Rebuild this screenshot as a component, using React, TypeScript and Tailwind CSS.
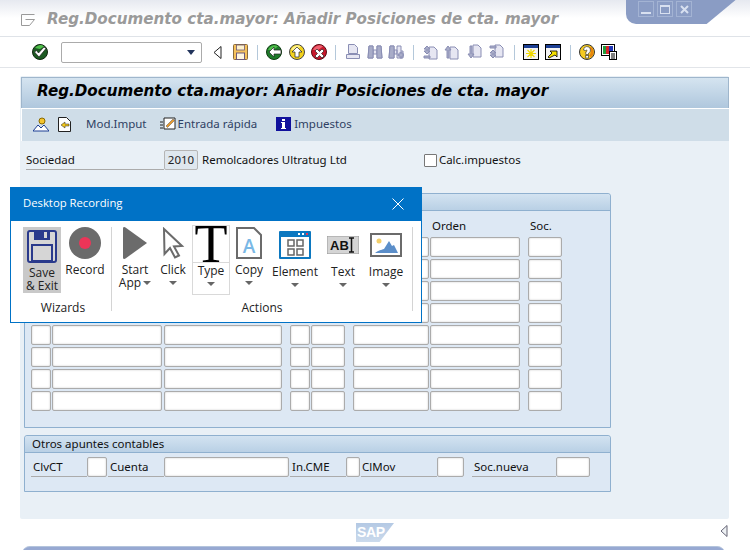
import type { ReactNode } from "react";

const sapFont = "font-['Noto_Sans',sans-serif]";

function Sep() {
  return <div className="w-px h-[15px] bg-[#b4c8da]" />;
}

function Check() {
  return (
    <svg width="16" height="16" viewBox="0 0 16 16">
      <circle cx="8" cy="8" r="7.5" fill="#1c5a22" stroke="#10260f" />
      <path d="M3 4a6 6 0 0 1 9-1.500L8 5z" fill="#4fc04a" />
      <path d="M2.500 8l2-1.500 2 2.500 5.500-6 2 1.500L7 13z" fill="#fff" stroke="#222" strokeWidth="0.7" />
    </svg>
  );
}

function Round({ bg, edge, shine, d }: { bg: string; edge: string; shine: string; d: string }) {
  return (
    <svg width="16" height="16" viewBox="0 0 16 16">
      <circle cx="8" cy="8" r="7.5" fill={bg} stroke={edge} />
      <path d="M2 6a6.500 6.500 0 0 1 10-3.500L7 6z" fill={shine} />
      <path d={d} fill="#fff" stroke="#222" strokeWidth="0.7" />
    </svg>
  );
}

function Floppy() {
  return (
    <svg width="15" height="16" viewBox="0 0 15 16">
      <rect x="0.5" y="0.5" width="14" height="15" rx="1" fill="#f6c25c" stroke="#8a6a3a" />
      <rect x="3.500" y="1" width="8" height="5" fill="#fff2cc" stroke="#6c5a7c" strokeWidth="0.8" />
      <rect x="3.500" y="9" width="8" height="6.500" fill="#fff6e0" stroke="#6c5a7c" />
    </svg>
  );
}

function Doc({ d, extra }: { d: string; extra?: string }) {
  return (
    <svg width="16" height="16" viewBox="0 0 16 16" fill="#e6e6f2" stroke="#8a8eb4">
      <path d={d} />
      {extra && <path d={extra} fill="#a8acc8" />}
    </svg>
  );
}

function WinIcon({ kind }: { kind: "new" | "link" }) {
  return (
    <svg width="16" height="16" viewBox="0 0 16 16">
      <rect x="0.5" y="0.5" width="15" height="15" fill="#f4f4f4" stroke="#000" />
      <rect x="1" y="1" width="14" height="3" fill="#1c3f94" />
      {kind === "new" ? (
        <path d="M8 5v9M3 9.500h10M4.500 6l7 7M11.500 6l-7 7" stroke="#f0d800" strokeWidth="1.200" />
      ) : (
        <path d="M4 14l-1-1 4-4-2-2h7v6l-2-2z" fill="#f5e000" stroke="#000" strokeWidth="0.8" />
      )}
    </svg>
  );
}

function Help() {
  return (
    <svg width="16" height="16" viewBox="0 0 16 16">
      <circle cx="8" cy="8" r="7.500" fill="#f5cb20" stroke="#333" />
      <path d="M12 2.500a7 7 0 0 1 0 11l-2-2a4.500 4.500 0 0 0 0-7z" fill="#e8860c" />
      <path d="M4.500 6a3.500 3.500 0 1 1 5 3.200V10.500H6.800V8c1.200-.4 1.500-1.100 1.200-1.600-.4-.5-1-.3-1.100.4z" fill="#fff" stroke="#222" strokeWidth="0.6" />
      <rect x="6.800" y="11.500" width="2.500" height="2.500" fill="#fff" stroke="#222" strokeWidth="0.6" />
    </svg>
  );
}

function Layout() {
  return (
    <svg width="16" height="16" viewBox="0 0 16 16">
      <rect x="0.500" y="0.500" width="13" height="11" fill="#fff" stroke="#000" />
      <rect x="2" y="2" width="3" height="8" fill="#1f9e3c" />
      <rect x="5" y="2" width="3" height="8" fill="#d8242c" />
      <rect x="8" y="2" width="4" height="8" fill="#2038b8" />
      <rect x="8.500" y="7.500" width="7" height="8" fill="#fff" stroke="#000" />
      <path d="M10 10h4M10 12h4M10 14h4" stroke="#000" />
    </svg>
  );
}

function Input({ className = "", children }: { className?: string; children?: ReactNode }) {
  return (
    <div className={`h-5 shrink-0 rounded-[2px] border border-[#ababab] bg-white shadow-[inset_0_0_2px_#c4c4c4] ${className}`}>
      {children}
    </div>
  );
}

function Caret() {
  return <div className="w-0 h-0 border-x-[4px] border-x-transparent border-t-[4px] border-t-[#666]" />;
}

function GroupHead({ title }: { title?: string }) {
  return (
    <div className={`h-[17px] border-b border-[#8fb0cf] rounded-t-[3px] bg-gradient-to-b from-[#d3e3f1] to-[#b9d0e5] pl-[7px] text-[11.5px] leading-[16px] text-[#111] ${sapFont}`}>
      {title}
    </div>
  );
}

function Row() {
  return (
    <div className="flex">
      <Input className="w-5" />
      <Input className="w-[110px] ml-px" />
      <Input className="w-[118px] ml-[2px]" />
      <Input className="w-5 ml-2" />
      <Input className="w-[34px] ml-px" />
      <Input className="w-[76px] ml-2" />
      <Input className="w-[90px] ml-px" />
      <Input className="w-[34px] ml-2" />
    </div>
  );
}

function Label({ className, children }: { className: string; children: ReactNode }) {
  return (
    <div className={`h-5 shrink-0 border-b border-[#ababab] text-[11.5px] leading-[20px] text-[#111] ${className}`}>
      {children}
    </div>
  );
}

function Tool({ icon, label, className, top = "", labelGap = "mt-[4px]", caret = true }: { icon: ReactNode; label: ReactNode; className: string; top?: string; labelGap?: string; caret?: boolean }) {
  return (
    <div className={`flex flex-col items-center shrink-0 ${className}`}>
      <div className={`h-8 flex items-center justify-center ${top}`}>{icon}</div>
      <div className={`text-xs leading-[13px] text-center text-[#222] ${labelGap}`}>{label}</div>
      {caret && (
        <div className="mt-[5px]">
          <Caret />
        </div>
      )}
    </div>
  );
}

function Dialog() {
  return (
    <div className="absolute left-[10px] top-[187px] w-[412px] h-[136px] border border-[#0072c6] bg-white font-['Open_Sans',sans-serif]">
      <div className="h-[33px] bg-[#0072c6] flex items-center justify-between pl-3 pr-[17px] pb-[2px] text-white text-[11.3px]">
        <span>Desktop Recording</span>
        <svg width="12" height="12" viewBox="0 0 12 12" stroke="#fff" strokeWidth="1">
          <path d="M0.5 0.5l11 11M11.5 0.5l-11 11" />
        </svg>
      </div>
      <div className="flex h-[101px] pt-[6px] pl-3">
        <div className="flex flex-col w-[88px] shrink-0">
          <div className="flex h-[66px]">
            <div className="w-[38px] h-[66px] bg-[#c9c9c9] flex flex-col items-center pt-[3px]">
              <svg width="30" height="33" viewBox="0 0 30 33">
                <rect x="1" y="1" width="28" height="31" rx="2" fill="#d6d6d6" stroke="#2a3a8c" strokeWidth="2" />
                <rect x="7" y="1" width="16" height="9" fill="#2a3a8c" />
                <rect x="17" y="2" width="3" height="6" fill="#d6d6d6" />
                <rect x="5" y="15" width="20" height="16" fill="#d6d6d6" stroke="#2a3a8c" strokeWidth="2" />
              </svg>
              <div className="text-xs leading-[13px] mt-[3px] text-center text-[#222]">
                Save
                <br />&amp; Exit
              </div>
            </div>
            <Tool
              className="w-[40px] ml-1"
              caret={false}
              label="Record"
              icon={
                <svg width="32" height="32" viewBox="0 0 32 32">
                  <circle cx="16" cy="16" r="16" fill="#6b6b6b" />
                  <circle cx="16" cy="16" r="6" fill="#ec3558" />
                </svg>
              }
            />
          </div>
          <div className="mt-[7px] pr-2 text-xs leading-4 text-center text-[#222]">Wizards</div>
        </div>
        <div className="w-px h-[84px] bg-[#d4d4d4]" />
        <div className="flex flex-col w-[300px] shrink-0">
          <div className="flex h-[66px]">
            <Tool
              className="w-[46px]"
              caret={false}
              label={
                <span className="flex flex-col items-center">
                  Start
                  <span className="inline-flex items-center gap-[2px]">
                    App
                    <Caret />
                  </span>
                </span>
              }
              icon={
                <svg width="24" height="32" viewBox="0 0 24 32">
                  <path d="M0 1.500c0-1.500 1-2 2.500-1L24 16 2.500 31.500C1 32.500 0 32 0 30.500z" fill="#6b6b6b" />
                </svg>
              }
            />
            <Tool
              className="w-[30px]"
              label="Click"
              icon={
                <svg width="24" height="32" viewBox="0 0 24 32" fill="#fff" stroke="#6b6b6b" strokeWidth="2">
                  <path d="M3 2l18 17-8 .5 5 9-4 2-5-9.500-5.500 6z" />
                </svg>
              }
            />
            <div className="w-[38px] h-[70px] -mt-[2px] ml-1 border border-[#d9d9d9] flex flex-col items-center shrink-0">
              <div className="h-[37px] w-full border-b border-[#d9d9d9] text-center font-['Liberation_Serif',serif] text-[54px] leading-[37px] text-black">
                T
              </div>
              <div className="text-xs leading-[13px] mt-[1px] text-[#222]">Type</div>
              <div className="mt-[5px]">
                <Caret />
              </div>
            </div>
            <Tool
              className="w-[38px]"
              label="Copy"
              icon={
                <svg width="26" height="32" viewBox="0 0 26 32">
                  <path d="M1 1h17l7 7v23H1z" fill="#fff" stroke="#6b6b6b" strokeWidth="2" />
                  <text x="13" y="26" textAnchor="middle" fontSize="19" fontWeight="600" fill="#7ab8e6" fontFamily="Open Sans">
                    A
                  </text>
                </svg>
              }
            />
            <Tool
              className="w-[54px]"
              top="pt-[4px]"
              labelGap="mt-[6px]"
              label="Element"
              icon={
                <svg width="32" height="28" viewBox="0 0 32 28">
                  <rect width="32" height="28" rx="1" fill="#0c78c0" />
                  <rect x="2" y="6" width="28" height="20" fill="#fff" />
                  <path d="M19 3h2M23 3h2" stroke="#fff" strokeWidth="2" />
                  <path d="M27 3h2" stroke="#ec3558" strokeWidth="2" />
                  <g fill="none" stroke="#666" strokeWidth="1.500">
                    <rect x="9" y="9" width="6" height="6" />
                    <rect x="18" y="9" width="6" height="6" />
                    <rect x="9" y="18" width="6" height="6" />
                    <rect x="18" y="18" width="6" height="6" />
                  </g>
                </svg>
              }
            />
            <Tool
              className="w-[42px]"
              top="pt-[4px]"
              labelGap="mt-[6px]"
              label="Text"
              icon={
                <svg width="32" height="18" viewBox="0 0 32 18">
                  <rect width="32" height="18" fill="#d4d4d4" stroke="#999" />
                  <text x="3" y="14" fontSize="13" fontWeight="700" fill="#111" fontFamily="Liberation Sans">
                    AB
                  </text>
                  <path d="M22 2h5M24.500 2v14M22 16h5" stroke="#111" strokeWidth="1.500" />
                </svg>
              }
            />
            <Tool
              className="w-[44px]"
              top="pt-[4px]"
              labelGap="mt-[6px]"
              label="Image"
              icon={
                <svg width="32" height="24" viewBox="0 0 32 24">
                  <rect x="1" y="1" width="30" height="22" fill="#fff" stroke="#6b6b6b" strokeWidth="2" />
                  <circle cx="9" cy="8" r="2.500" fill="#f3cf6b" />
                  <path d="M5 20c4-3 6-3 9-4l5-8 3 5 2-1 4 8z" fill="#5b8ec9" />
                </svg>
              }
            />
          </div>
          <div className="mt-[7px] text-xs leading-4 text-center text-[#222]">Actions</div>
        </div>
        <div className="w-px h-[84px] bg-[#d4d4d4]" />
      </div>
    </div>
  );
}

export default function App() {
  return (
    <div className={`relative w-[750px] h-[550px] overflow-hidden bg-white ${sapFont}`}>
      {/* title */}
      <div className="h-[37px] border-b border-[#dfe3e8] bg-gradient-to-b from-[#e6e9f0] via-white to-white flex items-center pt-[2px] pl-[21px]">
        <svg className="mt-[2px]" width="15" height="12" viewBox="0 0 15 12" fill="none" stroke="#9a9a9a">
          <path d="M0.5 0.5h13M0.5 0.5v11h8l5-6h-9" />
        </svg>
        <div className="ml-[11px] font-['DejaVu_Sans',sans-serif] font-bold italic text-[15.15px] text-[#9a9a9a] whitespace-nowrap">
          Reg.Documento cta.mayor: Añadir Posiciones de cta. mayor
        </div>
      </div>

      {/* window buttons */}
      <div className="absolute left-[626px] -top-[2px] w-[112px] h-[26px] rounded-bl-[10px] bg-[#8a9cc4] [clip-path:polygon(0_0,100%_0,72%_100%,0_100%)]">
        <div className="flex gap-[3px] pl-[12px] pt-[3px]">
          <div className="w-4 h-4 border border-[#a3b3d3] flex items-end justify-center pb-[2px]">
            <div className="w-[10px] h-[2px] bg-[#d8e0f0]" />
          </div>
          <div className="w-4 h-4 border border-[#a3b3d3] flex items-center justify-center">
            <div className="w-[10px] h-[9px] border border-t-2 border-[#d8e0f0]" />
          </div>
          <div className="w-4 h-4 border border-[#a3b3d3] flex items-center justify-center">
            <svg width="9" height="9" viewBox="0 0 9 9" stroke="#d8e0f0" strokeWidth="2">
              <path d="M1 1l7 7M8 1l-7 7" />
            </svg>
          </div>
        </div>
      </div>

      {/* toolbar */}
      <div className="h-[31px] border-b border-[#e2e5e9] flex items-center pl-[32px]">
        <Check />
        <div className="ml-[13px] w-[141px] h-[21px] rounded-[2px] border border-[#ababab] bg-white flex items-center justify-end pr-[6px]">
          <div className="w-0 h-0 border-x-[4px] border-x-transparent border-t-[5px] border-t-[#22345c]" />
        </div>
        <svg className="ml-[11px]" width="9" height="13" viewBox="0 0 9 13" fill="#fff" stroke="#222">
          <path d="M8 0.500v12l-7-6z" />
        </svg>
        <div className="ml-[11px]">
          <Floppy />
        </div>
        <div className="ml-[9px]">
          <Sep />
        </div>
        <div className="ml-[8px]">
          <Round bg="#1e7a2a" edge="#0f3d12" shine="#4fc04a" d="M3 8l5-5v3h7v4H8v3z" />
        </div>
        <div className="ml-[7px]">
          <Round bg="#f3d21c" edge="#444" shine="#fff28a" d="M8 3l5 5h-3v5H6V8H3z" />
        </div>
        <div className="ml-[6px]">
          <Round bg="#c8182c" edge="#5a0a12" shine="#ee6070" d="M6 5l2.500 2.500L11 5l2 2-2.500 2.500L13 12l-2 2-2.500-2.500L6 14l-2-2 2.500-2.500L4 7z" />
        </div>
        <div className="ml-[8px]">
          <Sep />
        </div>
        <div className="ml-[9px]">
          <Doc d="M3.500 0.500h6l3 3v6h-9zM1.500 10.500h13v4h-13z" />
        </div>
        <div className="ml-[6px]">
          <Doc d="M2 2h4v12H1zM10 2h4l1 12h-5zM6 6h4v4H6z" extra="M2 2h4v12H1zM10 2h4l1 12h-5z" />
        </div>
        <div className="ml-[5px]">
          <Doc d="M2 2h4v12H1zM9 2h4v5h2v7H9zM6 6h3v4H6z" extra="M2 2h4v12H1zM12 8h2v2h2v2h-2v2h-2v-2h-2v-2h2z" />
        </div>
        <div className="ml-[9px]">
          <Sep />
        </div>
        <div className="ml-[9px]">
          <Doc d="M6 3h5l3 3v9H6z" extra="M1 5l3-3 3 3H5v2h2l-3 3-3-3h2V5zM1 12h6v2H1z" />
        </div>
        <div className="ml-[5px]">
          <Doc d="M6 3h5l3 3v9H6z" extra="M1 6l3-4 3 4H5v8H3V6z" />
        </div>
        <div className="ml-[7px]">
          <Doc d="M6 1h5l3 3v9H6z" extra="M1 10l3 4 3-4H5V2H3v8z" />
        </div>
        <div className="ml-[6px]">
          <Doc d="M6 1h5l3 3v9H6z" extra="M1 2h6v2H1zM1 11l3 3 3-3H5V9h2L4 6 1 9h2v2z" />
        </div>
        <div className="ml-[9px]">
          <Sep />
        </div>
        <div className="ml-[8px]">
          <WinIcon kind="new" />
        </div>
        <div className="ml-[6px]">
          <WinIcon kind="link" />
        </div>
        <div className="ml-[9px]">
          <Sep />
        </div>
        <div className="ml-[8px]">
          <Help />
        </div>
        <div className="ml-[6px]">
          <Layout />
        </div>
      </div>

      {/* main area */}
      <div className="mt-2 ml-5 w-[709px] h-[443px] rounded-[2px] bg-[#e9f0f6] pt-px">
        <div className="ml-px">
          <div className="h-[31px] border border-b-0 border-[#9fb6cc] bg-gradient-to-b from-[#d5e4f0] to-[#afc7dd] flex items-center pl-[15px] pb-[3px] font-['DejaVu_Sans',sans-serif] font-bold italic text-[15.15px] text-black whitespace-nowrap">
            Reg.Documento cta.mayor: Añadir Posiciones de cta. mayor
          </div>
          <div className="h-[33px] border-t border-white bg-[#cfdde8] border-l border-[#9fb6cc] flex items-center pl-[11px] pb-[2px] text-[11.5px] text-[#2e3f63]">
            <svg width="16" height="15" viewBox="0 0 16 15">
              <circle cx="9" cy="4" r="3" fill="#f4c430" stroke="#8a6a00" />
              <path d="M0 14l5-6 3 3 3-3 5 6z" fill="#fff" stroke="#1c3f94" />
            </svg>
            <svg className="ml-[9px]" width="13" height="15" viewBox="0 0 13 15">
              <path d="M0.5 0.5h8l4 4v10H0.500z" fill="#fff" stroke="#222" />
              <path d="M3 8l4-3v2h4v2H7v2z" fill="#f2c81c" stroke="#222" strokeWidth="0.5" />
            </svg>
            <span className="ml-[15px]">Mod.Imput</span>
            <svg className="ml-[13px]" width="16" height="14" viewBox="0 0 16 14">
              <path d="M4 1h11v11H4z" fill="#fff" stroke="#222" />
              <path d="M6 9l7-7 1.500 1.500-7 7z" fill="#e89a2c" stroke="#555" strokeWidth="0.5" />
              <path d="M0 5h3M0 8h3M0 11h3" stroke="#222" />
            </svg>
            <span className="ml-[2px]">Entrada rápida</span>
            <svg className="ml-[19px]" width="15" height="14" viewBox="0 0 15 14">
              <rect width="15" height="14" fill="#10109c" />
              <rect x="6" y="2" width="3" height="2" fill="#fff" />
              <path d="M5 5h4v6h1v1H5v-1h1V6H5z" fill="#fff" />
            </svg>
            <span className="ml-[3px]">Impuestos</span>
          </div>
        </div>

        {/* sociedad */}
        <div className="flex items-center h-5 mt-[9px] ml-[6px]">
          <Label className="w-[138px]">Sociedad</Label>
          <div className="h-5 w-[34px] shrink-0 rounded-[2px] border border-[#b5b5b5] bg-[#dfe7ee] text-[11.5px] leading-[18px] text-center text-[#222]">
            2010
          </div>
          <span className="ml-[4px] text-[11.5px] text-[#111]">Remolcadores Ultratug Ltd</span>
          <div className="ml-[77px] w-[13px] h-[13px] rounded-[1px] border border-[#777] bg-white shrink-0" />
          <span className="ml-[2px] text-[11.5px] text-[#111]">Calc.impuestos</span>
        </div>

        {/* posiciones */}
        <div className="mt-[23px] ml-1 w-[587px] h-[235px] rounded-t-[3px] border border-[#8fb0cf] bg-[#dde8f4]">
          <GroupHead />
          <div className="flex h-[26px] text-[11.5px] leading-[30px] text-[#111]">
            <span className="ml-[407px] w-[98px]">Orden</span>
            <span>Soc.</span>
          </div>
          <div className="flex flex-col gap-[2px] pl-[6px]">
            <Row />
            <Row />
            <Row />
            <Row />
            <Row />
            <Row />
            <Row />
            <Row />
          </div>
        </div>

        {/* otros apuntes */}
        <div className="mt-[7px] ml-1 w-[587px] h-[57px] rounded-t-[3px] border border-[#8fb0cf] bg-[#dde8f4]">
          <GroupHead title="Otros apuntes contables" />
          <div className="flex mt-[4px] ml-[6px]">
            <Label className="w-[56px] pl-[2px]">ClvCT</Label>
            <Input className="w-5" />
            <Label className="w-[56px] ml-px pl-[2px]">Cuenta</Label>
            <Input className="w-[125px]" />
            <Label className="w-[56px] ml-px pl-[2px]">In.CME</Label>
            <Input className="w-[14px]" />
            <Label className="w-[76px] ml-px pl-px">ClMov</Label>
            <Input className="w-[27px]" />
            <Label className="w-[84px] ml-2 pl-[2px]">Soc.nueva</Label>
            <Input className="w-[34px]" />
          </div>
        </div>
      </div>

      {/* footer */}
      <div className="relative h-[31px] flex justify-center pt-[4px]">
        <div className="w-[38px] h-[19px] bg-gradient-to-b from-[#b4c9e4] to-[#cbdaec] [clip-path:polygon(0_0,100%_0,62%_100%,0_100%)] text-white font-['Liberation_Sans',sans-serif] font-bold text-[14px] tracking-tight leading-[19px] pl-[1px]">
          SAP
        </div>
        <svg className="absolute left-[720px] top-[6px]" width="8" height="12" viewBox="0 0 8 12" fill="#eef1f4" stroke="#667">
          <path d="M7 0.500v11l-6-5.500z" />
        </svg>
        <div className="absolute left-[22px] right-[25px] top-[27px] h-[10px] rounded-t-[8px] border-t border-[#b4c4dc] bg-[#97a9d2]" />
      </div>

      <Dialog />
    </div>
  );
}
